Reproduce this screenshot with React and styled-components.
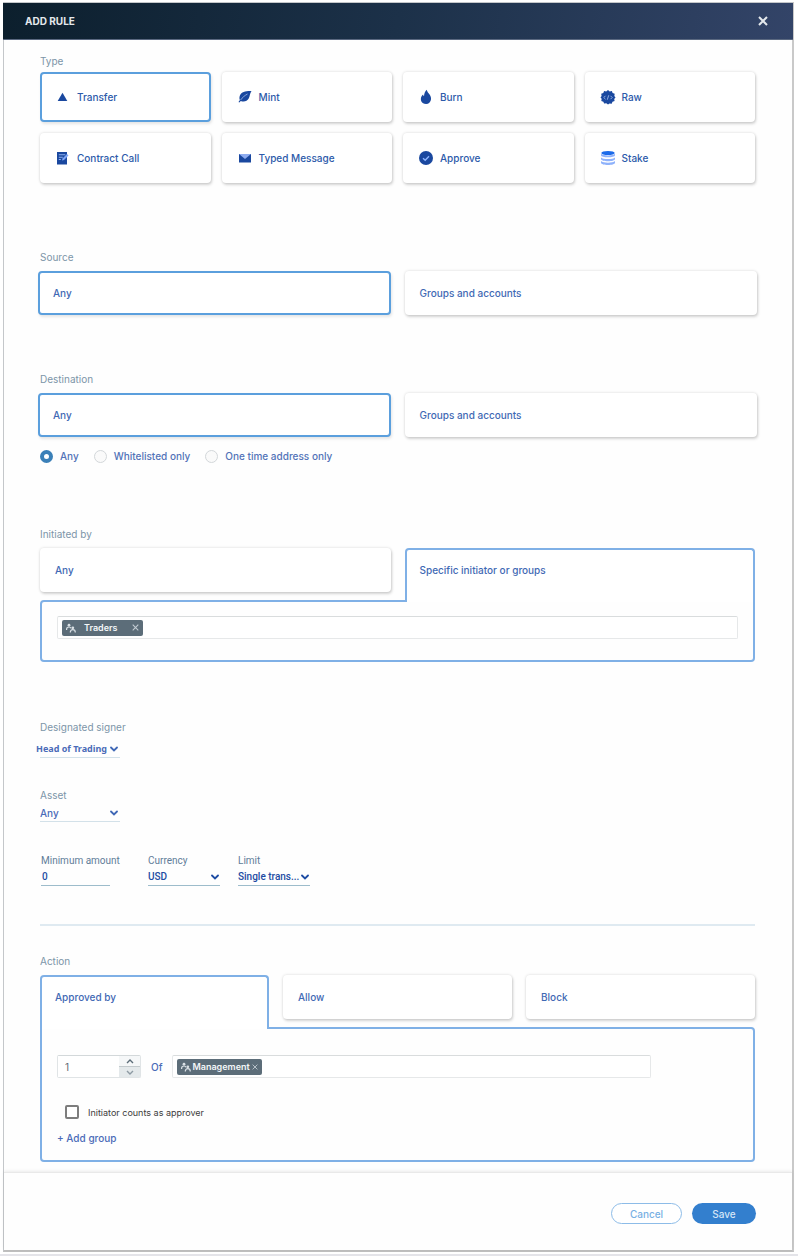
import { useState } from "react";
import styled, { createGlobalStyle } from "styled-components";

const GlobalStyle = createGlobalStyle`
  * {
    box-sizing: border-box;
  }
  body {
    margin: 0;
    background: #fff;
    font-family: Inter, "Liberation Sans", sans-serif;
  }
  button, input, select {
    font-family: inherit;
    margin: 0;
  }
`;

const Page = styled.div`
  padding: 2px 4px 2px 3px;
  border-bottom: 2px solid #e4e4e9;
`;

const Dialog = styled.main`
  border: 1px solid #c4c7ca;
  border-right: 2px solid #c9c9c9;
  border-bottom: 2px solid #bfbfbf;
  background: #fefefe;
`;

const Header = styled.header`
  display: flex;
  align-items: center;
  justify-content: space-between;
  height: 37px;
  padding: 0 22px;
  margin: 0 -1px;
  background: linear-gradient(100deg, #0c1f2d 0%, #1c3149 50%, #334468 100%);
  border-bottom: 1px solid #5a6880;
`;

const Title = styled.h1`
  margin: 0;
  font-size: 10px;
  font-weight: 700;
  color: #e4e8ec;
`;

const CloseButton = styled.button`
  display: flex;
  padding: 3px;
  border: 0;
  background: none;
  color: #e4e8ec;
  cursor: pointer;
`;

const Body = styled.div`
  padding: 14px 37px 10px 36px;
`;

const Section = styled.section`
  margin-top: ${(props) => props.$top || 0}px;
`;

const Label = styled.h2`
  margin: 0 0 ${(props) => (props.$tight ? 4 : 7)}px;
  font-size: 10px;
  line-height: 14px;
  font-weight: 400;
  color: #7c95a8;
`;

const TypeGrid = styled.div`
  display: grid;
  grid-template-columns: repeat(4, 1fr);
  gap: 11px;
`;

const Card = styled.button`
  display: flex;
  align-items: center;
  flex: 1;
  height: 44px;
  padding: 0 13px;
  border: 2px solid ${(props) => (props.$active ? "#5b9fdd" : "transparent")};
  border-radius: 4px;
  background: #fff;
  box-shadow: ${(props) =>
    props.$active
      ? "1px 2px 3px rgba(0, 0, 0, 0.1)"
      : "0 0 3px rgba(0, 0, 0, 0.15), 1px 2px 3px rgba(0, 0, 0, 0.15)"};
  font-size: 10px;
  font-weight: 500;
  color: #3f69b4;
  text-align: left;
  cursor: pointer;
`;

const TypeCard = styled(Card)`
  gap: 6px;
  height: 50px;
  color: #2c5aaa;
`;

const CardRow = styled.div`
  display: flex;
  gap: 14px;
  margin: 0 -2px;
`;

const RadioRow = styled.div`
  display: flex;
  gap: 15px;
  margin-top: 12px;
`;

const RadioLabel = styled.label`
  display: flex;
  align-items: center;
  gap: 7px;
  font-size: 10px;
  line-height: 14px;
  font-weight: 500;
  color: #5273b8;
`;

const Radio = styled.input`
  appearance: none;
  width: 13px;
  height: 13px;
  border: 1px solid #d3d7da;
  border-radius: 50%;
  background: #fafafa;

  &:checked {
    border: 4px solid #3b80b8;
    background: #fff;
  }
`;

const Tabs = styled.div`
  display: flex;
  align-items: flex-start;
  gap: 14px;
`;

const Tab = styled(Card)`
  ${(props) =>
    props.$active &&
    `
    position: relative;
    height: 54px;
    padding-bottom: 12px;
    margin-bottom: -2px;
    border-color: #7fb0e6;
    border-bottom: 0;
    border-radius: 4px 4px 0 0;
    box-shadow: none;
  `}
`;

const Panel = styled.div`
  padding: ${(props) => (props.$tall ? "26px 15px 15px" : "14px 15px 21px")};
  border: 2px solid #7fb0e6;
  border-radius: ${(props) => (props.$tall ? "0 4px 4px 4px" : "4px 0 4px 4px")};
  background: #fefefe;
`;

const TagField = styled.div`
  display: flex;
  align-items: center;
  flex: 1;
  height: 23px;
  padding: 0 4px;
  border: 1px solid #e6e8e9;
  border-top-color: #d9dcdd;
  border-radius: 2px;
  background: #fff;
`;

const TagInput = styled.input`
  flex: 1;
  min-width: 0;
  border: 0;
  outline: 0;
  background: none;
  font-size: 10px;
`;

const Tag = styled.span`
  display: flex;
  align-items: center;
  gap: ${(props) => (props.$dense ? 1 : 8)}px;
  height: 16px;
  padding: 0 4px;
  border-radius: 2px;
  background: #5c6d79;
  color: #f3f6f8;
  font-size: 9px;
  font-weight: 600;
`;

const TagRemove = styled.button`
  display: flex;
  padding: 0;
  margin-left: ${(props) => (props.$dense ? 1 : 6)}px;
  border: 0;
  background: none;
  color: #c3ccd3;
  cursor: pointer;
`;

const FieldLabel = styled.label`
  display: block;
  margin-bottom: ${(props) => props.$gap || 0}px;
  font-size: 10px;
  line-height: 14px;
  color: ${(props) => (props.$dark ? "#5f7d99" : "#7c95a8")};
`;

const SelectBox = styled.div`
  display: flex;
  align-items: center;
  width: ${(props) => props.$width}px;
  height: 18px;
  padding-right: ${(props) => (props.$dark ? 1 : 2)}px;
  border-bottom: 1px solid ${(props) => (props.$dark ? "#9dbccb" : "#d3e1e9")};
  color: ${(props) => (props.$dark ? "#1d4ca3" : "#4068b6")};
`;

const Select = styled.select`
  appearance: none;
  flex: 1;
  min-width: 0;
  padding: 0;
  border: 0;
  margin-left: ${(props) => (props.$outdent ? -4 : 0)}px;
  background: none;
  font-family: ${(props) => (props.$outdent ? '"Noto Sans", sans-serif' : "inherit")};
  font-size: ${(props) => (props.$outdent ? 9 : 10)}px;
  font-weight: ${(props) => (props.$outdent ? 700 : 500)};
  color: ${(props) => (props.$dark ? "#1d4ca3" : "#4a6bb8")};
`;

const AmountRow = styled.div`
  display: flex;
  gap: 18px;
  margin: 32px 0 0 1px;
  font-family: Roboto, "Liberation Sans", sans-serif;
`;

const AmountField = styled.div`
  width: ${(props) => props.$width}px;
`;

const AmountInput = styled.input`
  display: block;
  width: 69px;
  height: 18px;
  padding: 0 1px;
  border: 0;
  border-bottom: 1px solid #9dbccb;
  background: none;
  font-size: 10px;
  font-weight: 500;
  color: #1d4ca3;
`;

const Divider = styled.hr`
  height: 2px;
  margin: 38px 0 0;
  border: 0;
  background: #dfeaf1;
`;

const ApproverRow = styled.div`
  display: flex;
  align-items: center;
  margin-right: 87px;
`;

const Stepper = styled.div`
  display: flex;
  width: 84px;
  height: 23px;
  border: 1px solid #e0e4e6;
  border-top-color: #d3d8da;
  border-radius: 2px;
`;

const StepperInput = styled.input`
  flex: 1;
  min-width: 0;
  padding: 0 7px;
  border: 0;
  background: #fff;
  font-size: 10px;
  color: #5f6a72;
`;

const StepperButtons = styled.div`
  display: flex;
  flex-direction: column;
  width: 21px;
`;

const StepButton = styled.button`
  display: flex;
  align-items: center;
  justify-content: center;
  flex: 1;
  padding: 0;
  border: 0;
  border-bottom: ${(props) => (props.$down ? "0" : "1px solid #c3cacd")};
  background: ${(props) => (props.$down ? "#e4e9eb" : "#f5f7f8")};
  color: ${(props) => (props.$down ? "#8d9aa3" : "#5c6d79")};
`;

const Of = styled.span`
  margin: 0 10px;
  font-size: 10px;
  font-weight: 500;
  color: #4a6bb8;
`;

const CheckLabel = styled.label`
  display: flex;
  align-items: center;
  gap: 9px;
  height: 14px;
  margin: 27px 0 0 8px;
  font-size: 9px;
  color: #3c3c3c;
`;

const Checkbox = styled.input`
  appearance: none;
  width: 14px;
  height: 14px;
  border: 2px solid #7d7d7d;
  border-radius: 2px;
  background: #fff;
`;

const AddGroup = styled.button`
  display: block;
  padding: 0;
  margin-top: 12px;
  border: 0;
  background: none;
  font-size: 10px;
  line-height: 14px;
  font-weight: 500;
  color: #4a6bb8;
  cursor: pointer;
`;

const Footer = styled.footer`
  display: flex;
  align-items: center;
  justify-content: flex-end;
  gap: 10px;
  height: 78px;
  padding: 4px 36px 0 0;
  border-top: 1px solid #e9e9e9;
  box-shadow: 0 -1px 3px rgba(0, 0, 0, 0.08);
`;

const FooterButton = styled.button`
  width: ${(props) => (props.$primary ? 64 : 71)}px;
  height: 21px;
  padding: 0;
  border: ${(props) => (props.$primary ? "0" : "1px solid #8dbce8")};
  border-radius: 11px;
  background: ${(props) => (props.$primary ? "#337fce" : "#fff")};
  font-size: 10px;
  font-weight: 500;
  color: ${(props) => (props.$primary ? "#d3e5f7" : "#78afe3")};
  cursor: pointer;
`;

const Svg = ({ size = 16, box = 16, children }) => (
  <svg width={size} height={size} viewBox={`0 0 ${box} ${box}`} fill="none" aria-hidden="true">
    {children}
  </svg>
);

const Cross = ({ size, weight = 2 }) => (
  <Svg size={size} box={10}>
    <path d="M1 1l8 8M9 1l-8 8" stroke="currentColor" strokeWidth={weight} />
  </Svg>
);

const Chevron = () => (
  <Svg size={8} box={8}>
    <path d="M1 2.5l3 3 3-3" stroke="currentColor" strokeWidth="1.8" strokeLinecap="round" />
  </Svg>
);

const StepArrow = ({ down }) => (
  <svg width="8" height="5" viewBox="0 0 8 5" fill="none" aria-hidden="true">
    <path d={down ? "M1 1l3 3 3-3" : "M1 4l3-3 3 3"} stroke="currentColor" strokeWidth="1.4" />
  </svg>
);

const GroupIcon = () => (
  <Svg size={10} box={10}>
    <circle cx="3" cy="2.2" r="1.4" fill="#d9e0e5" />
    <path d="M.5 7c0-2 1-3 2.5-3s1.8.6 2 1.3" stroke="#d9e0e5" strokeWidth="1.2" />
    <circle cx="6.8" cy="4.8" r="1.4" fill="#d9e0e5" />
    <path d="M4.3 9.5c0-2 1-2.800 2.500-2.800s2.500.8 2.500 2.800" stroke="#d9e0e5" strokeWidth="1.2" />
  </Svg>
);

const navy = "#1a489f";

const types = [
  {
    name: "Transfer",
    icon: <path d="M7.5 3.8L12.3 12H2.7z" fill={navy} />,
  },
  {
    name: "Mint",
    icon: (
      <>
        <path
          d="M14.5 2C9 1.700 4.500 3 3 6.200c-.9 2-.6 3.700-.1 4.900L1.500 13l.8.6 1.500-1.700c3 1.300 6.300.4 7.900-2.300C13 7.300 12.700 4.500 14.500 2z"
          fill={navy}
        />
        <path d="M3.600 11C5.500 8.300 7.600 6.600 10.500 5" stroke="#a9c0ea" strokeWidth=".8" />
      </>
    ),
  },
  {
    name: "Burn",
    icon: (
      <path
        d="M8.800.8c.3 2 1.400 2.900 2.800 4.700 2.800 3.600 1.400 9.300-3.400 9.500-4.600.1-6.500-4.100-4.600-7.700.4-.8.900-1.400 1.500-1.900 0 .9.300 1.500.9 1.800C6.200 4.800 7 2.300 8.800.8z"
        fill={navy}
      />
    ),
  },
  {
    name: "Raw",
    icon: (
      <>
        <path
          d="M8 1l1.700 1.400 2.200-.4.7 2.100 2.100.7-.4 2.200L15.500 8.500l-1.300 1.400.4 2.100-2.100.8-.8 1.900-2.200-.3L8 15.500l-1.700-1.200-2.200.3-.7-1.900-2.100-.8.4-2.100L.5 8.500 1.600 7l-.4-2.200 2.100-.7.800-2.100 2.100.4z"
          fill={navy}
        />
        <path
          d="M5.500 6.800L3.800 8.500l1.700 1.700M10.500 6.800l1.700 1.700-1.700 1.700M8.700 6.300l-1.400 4.400"
          stroke="#9fb8e6"
          strokeWidth=".9"
        />
      </>
    ),
  },
  {
    name: "Contract Call",
    icon: (
      <>
        <path d="M2 2h10v12.500H2z" fill={navy} />
        <path d="M3.800 4.700h6.500M3.800 7.200h4M3.800 9.500h2" stroke="#8fb0f0" strokeWidth="1.100" />
        <path d="M7 10.500l.5-2 4.500-4.500 1.500 1.500L9 10z" fill="#7fa5f5" />
      </>
    ),
  },
  {
    name: "Typed Message",
    icon: (
      <>
        <path d="M2 4h12v8.500H2z" fill={navy} />
        <path d="M2 4h12L8 9z" fill="#8eacf0" />
      </>
    ),
  },
  {
    name: "Approve",
    icon: (
      <>
        <circle cx="8" cy="8" r="7" fill={navy} />
        <path d="M5 8.200l2.200 2.100L11 6.300" stroke="#8eb4ff" strokeWidth="1.400" />
      </>
    ),
  },
  {
    name: "Stake",
    icon: (
      <>
        <path d="M1 11v1.700c0 3 14 3 14 0V11c-2 2.200-12 2.200-14 0z" fill="#8fb2fb" />
        <path d="M1 7.400v1.500c0 3 14 3 14 0V7.400c-2 2.200-12 2.200-14 0z" fill="#8fb2fb" />
        <path d="M1 3.800v1.400c0 2.800 14 2.800 14 0V3.800c-2 2.300-12 2.300-14 0z" fill="#8fb2fb" />
        <ellipse cx="8" cy="3" rx="6.700" ry="2.100" fill="#1c6bea" />
      </>
    ),
  },
];

const destinations = ["Any", "Whitelisted only", "One time address only"];

const App = () => {
  const [type, setType] = useState("Transfer");
  const [source, setSource] = useState("Any");
  const [destination, setDestination] = useState("Any");
  const [approvers, setApprovers] = useState(1);

  return (
    <>
      <GlobalStyle />
      <Page>
        <Dialog>
          <Header>
            <Title>ADD RULE</Title>
            <CloseButton aria-label="Close">
              <Cross size={10} />
            </CloseButton>
          </Header>
          <Body>
            <Section>
              <Label $tight>Type</Label>
              <TypeGrid>
                {types.map((item) => (
                  <TypeCard
                    key={item.name}
                    $active={type === item.name}
                    aria-pressed={type === item.name}
                    onClick={() => setType(item.name)}
                  >
                    <Svg>{item.icon}</Svg>
                    {item.name}
                  </TypeCard>
                ))}
              </TypeGrid>
            </Section>

            <Section $top={67}>
              <Label>Source</Label>
              <CardRow>
                {["Any", "Groups and accounts"].map((name) => (
                  <Card key={name} $active={source === name} onClick={() => setSource(name)}>
                    {name}
                  </Card>
                ))}
              </CardRow>
            </Section>

            <Section $top={57}>
              <Label>Destination</Label>
              <CardRow>
                {["Any", "Groups and accounts"].map((name) => (
                  <Card key={name} $active={destination === name} onClick={() => setDestination(name)}>
                    {name}
                  </Card>
                ))}
              </CardRow>
              <RadioRow>
                {destinations.map((name, i) => (
                  <RadioLabel key={name}>
                    <Radio type="radio" name="address" defaultChecked={i === 0} />
                    {name}
                  </RadioLabel>
                ))}
              </RadioRow>
            </Section>

            <Section $top={64}>
              <Label>Initiated by</Label>
              <Tabs>
                <Tab>Any</Tab>
                <Tab $active>Specific initiator or groups</Tab>
              </Tabs>
              <Panel>
                <TagField>
                  <Tag>
                    <GroupIcon />
                    Traders
                    <TagRemove aria-label="Remove Traders">
                      <Cross size={7} weight={1.5} />
                    </TagRemove>
                  </Tag>
                  <TagInput aria-label="Initiators" />
                </TagField>
              </Panel>
            </Section>

            <Section $top={58}>
              <FieldLabel htmlFor="signer" $gap={6}>
                Designated signer
              </FieldLabel>
              <SelectBox $width={80}>
                <Select id="signer" $outdent>
                  <option>Head of Trading</option>
                </Select>
                <Chevron />
              </SelectBox>
            </Section>

            <Section $top={30}>
              <FieldLabel htmlFor="asset" $gap={2}>
                Asset
              </FieldLabel>
              <SelectBox $width={80}>
                <Select id="asset">
                  <option>Any</option>
                </Select>
                <Chevron />
              </SelectBox>
            </Section>

            <AmountRow>
              <AmountField $width={89}>
                <FieldLabel htmlFor="amount" $dark>
                  Minimum amount
                </FieldLabel>
                <AmountInput id="amount" defaultValue="0" />
              </AmountField>
              <AmountField $width={72}>
                <FieldLabel htmlFor="currency" $dark>
                  Currency
                </FieldLabel>
                <SelectBox $width={72} $dark>
                  <Select id="currency" $dark>
                    <option>USD</option>
                  </Select>
                  <Chevron />
                </SelectBox>
              </AmountField>
              <AmountField $width={72}>
                <FieldLabel htmlFor="limit" $dark>
                  Limit
                </FieldLabel>
                <SelectBox $width={72} $dark>
                  <Select id="limit" $dark>
                    <option>Single trans...</option>
                  </Select>
                  <Chevron />
                </SelectBox>
              </AmountField>
            </AmountRow>

            <Divider />

            <Section $top={28}>
              <Label>Action</Label>
              <Tabs>
                <Tab $active>Approved by</Tab>
                <Tab>Allow</Tab>
                <Tab>Block</Tab>
              </Tabs>
              <Panel $tall>
                <ApproverRow>
                  <Stepper>
                    <StepperInput
                      aria-label="Number of approvers"
                      value={approvers}
                      onChange={(e) => setApprovers(Number(e.target.value) || 1)}
                    />
                    <StepperButtons>
                      <StepButton aria-label="More" onClick={() => setApprovers(approvers + 1)}>
                        <StepArrow />
                      </StepButton>
                      <StepButton
                        $down
                        aria-label="Fewer"
                        onClick={() => setApprovers(Math.max(1, approvers - 1))}
                      >
                        <StepArrow down />
                      </StepButton>
                    </StepperButtons>
                  </Stepper>
                  <Of>Of</Of>
                  <TagField>
                    <Tag $dense>
                      <GroupIcon />
                      Management
                      <TagRemove $dense aria-label="Remove Management">
                        <Cross size={6} weight={1.5} />
                      </TagRemove>
                    </Tag>
                    <TagInput aria-label="Approvers" />
                  </TagField>
                </ApproverRow>
                <CheckLabel>
                  <Checkbox type="checkbox" />
                  Initiator counts as approver
                </CheckLabel>
                <AddGroup>+ Add group</AddGroup>
              </Panel>
            </Section>
          </Body>
          <Footer>
            <FooterButton>Cancel</FooterButton>
            <FooterButton $primary>Save</FooterButton>
          </Footer>
        </Dialog>
      </Page>
    </>
  );
};

export default App;
